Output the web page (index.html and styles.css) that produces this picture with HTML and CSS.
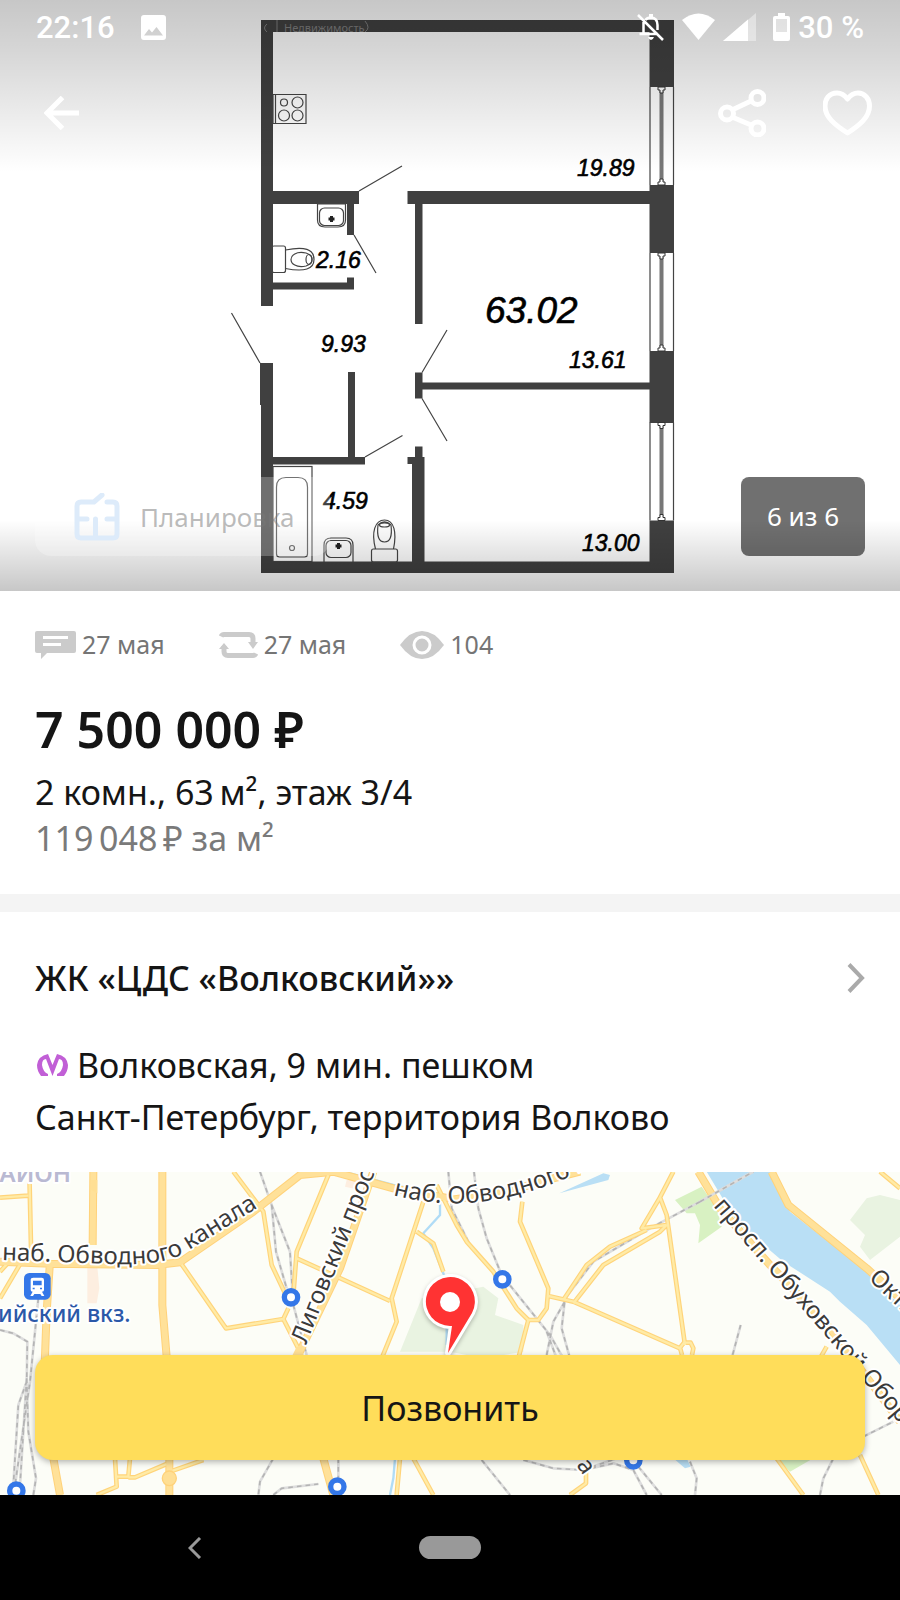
FILE: index.html
```html
<!DOCTYPE html>
<html lang=ru>
  <head>
    <meta charset=utf-8>
    <title>2 комн., 63 м²</title>
    <meta name=viewport content="width=device-width,initial-scale=1">
    <link rel="stylesheet" href="styles.css">
  </head>
  <body>
    <div class=gallery>
      <svg class=plan viewBox="0 0 900 591">
        <defs>
          <linearGradient id=shadeTop x1=0 y1=0 x2=0 y2=1>
            <stop offset=0 stop-opacity=".22"/>
            <stop offset=".3" stop-opacity=".16"/>
            <stop offset=1 stop-opacity=0 />
          </linearGradient>
          <linearGradient id=shadeBottom x1=0 y1=0 x2=0 y2=1>
            <stop offset=0 stop-opacity=0 />
            <stop offset=1 stop-opacity=".22"/>
          </linearGradient>
          <clipPath id=markClip><rect x=261 y=20 width=120 height=12 /></clipPath>
          <g id=window>
            <path class=pane d="M650 0V98M673.5 0V98"/>
            <rect class=bar x=659.5 y=4 width=4 height=90 />
            <path class=cap d="M658 0h7v3h-2v3h-3v-3h-2zM658 98h7v-3h-2v-3h-3v3h-2z"/>
          </g>
        </defs>
        <g class=walls>
          <path d="M261 20H674V87H649.500V32H273V191H359V204H354V235H347V204H273V282.500H347V277.500H354V289.500H273V306H261z"/>
          <path d="M407.500 191H649.500V185H674V253H649.500V204H422.500V324H415V204H407.500z"/>
          <path d="M415 372.500H422.500V382.500H649.500V351H674V423H649.500V389.500H422.500V398.500H415z"/>
          <path d="M260 363H273V457H348V372H355V457H365V464.500H273V561.500H412V464H407.500V457H415V446.500H422.500V457H424.500V561.500H649.500V520.500H674V573H261V405H260z"/>
        </g>
        <use href="#window" y=87 />
        <use href="#window" y=253 />
        <use href="#window" y=422.500 />
        <g class=lines>
          <path d="M359 191L402 166M354 235L376 273M260 363L231.500 313M422 372.500L447 330M422 398.500L447 441M365 457L402.500 435.500"/>
          <!-- stove -->
          <path d="M273 94.500H306V123.500H273zM275.500 94.500V123.500"/>
          <circle cx=284 cy=102.500 r=3.500 /><circle cx=297.500 cy=102.500 r=5.500 />
          <circle cx=284 cy=115.500 r=5.500 /><circle cx=297.500 cy=115.500 r=5.500 />
          <!-- wc -->
          <path d="M317.500 204H345.500V220Q345.500 227 338 227H325Q317.500 227 317.500 220z"/>
          <rect x=319.500 y=208 width=24 height=17.500 rx=5 />
          <path class=plus d="M328.500 219h6M331.500 216v6"/>
          <rect x=272 y=246 width=13.500 height=26.500 rx=2 />
          <path d="M285.500 250Q314 244 314 259.500Q314 274 285.500 268.500"/>
          <path d="M306 253C286 249 286 270 306 266Q312 264 312 259.500Q312 255 306 253z"/>
          <ellipse cx=309 cy=259.500 rx=3 ry=5 />
          <!-- bathroom -->
          <rect x=273 y=466.500 width=39 height=95 />
          <path d="M276.500 487Q276.500 477.500 286 477.500H298Q307.500 477.500 307.500 487V554Q307.500 557 304.500 557H279.500Q276.500 557 276.500 554z"/>
          <circle cx=292 cy=548 r=2.500 />
          <path d="M324 562V545Q324 538 331 538H346Q353 538 353 545V562"/>
          <rect x=326 y=540.500 width=25 height=17 rx=5 />
          <path class=plus d="M335.500 546h6M338.500 543v6"/>
          <rect x=371.500 y=549 width=26 height=13 rx=2 />
          <path d="M375.500 549C371 532 375 520 384.500 520S397 532 393.500 549"/>
          <path d="M378 525Q376 542 384.500 542Q393 542 391 525Q384.500 519 378 525z"/>
          <ellipse cx=384.500 cy=525 rx=5 ry=2 />
        </g>
        <g class=area>
          <text x=577 y=176>19.89</text>
          <text x=316 y=268>2.16</text>
          <text x=321 y=352>9.93</text>
          <text x=569 y=368>13.61</text>
          <text x=323 y=509>4.59</text>
          <text x=582 y=551>13.00</text>
          <text class=total x=485 y=323>63.02</text>
        </g>
        <rect width=900 height=172 fill="url(#shadeTop)"/>
        <rect y=520 width=900 height=71 fill="url(#shadeBottom)"/>
        <g class=mark clip-path="url(#markClip)">
          <text x=284 y=32>Недвижимость</text>
          <path d="M267 24q-5 4 0 8M277 20v12M365 21q6 7 0 11"/>
        </g>
      </svg>

      <div class=status>
        <span class=time>22:16</span>
        <svg class=picture width=25 height=25 viewBox="0 0 25 25">
          <path fill="#fff" fill-rule=evenodd d="M3 0H22Q25 0 25 3V22Q25 25 22 25H3Q0 25 0 22V3Q0 0 3 0zM3 20.500H22L15.500 12L11 17.500L8 14z"/>
        </svg>
        <svg class=bell width=27 height=28 viewBox="0 0 27 28">
          <path fill=none stroke="#fff" stroke-width=2.500 d="M6.500 9V21H2.500H21M8.500 7Q10 4.500 14 4.500Q20.500 5 20.500 12V17M1 2L26 27"/>
          <path fill="#fff" d="M12 1h4v4h-4zM11 24h6q-1 3-3 3t-3-3z"/>
        </svg>
        <svg class=wifi width=33 height=28 viewBox="0 0 33 28">
          <path fill="#fff" d="M0 7Q16.500-6 33 7L16.500 27z"/>
        </svg>
        <svg class=signal width=33 height=28 viewBox="0 0 33 28">
          <path fill="#fff" opacity=".4" d="M0 28L33 0V28z"/>
          <path fill="#fff" d="M0 28L25 6.500V28z"/>
        </svg>
        <svg class=battery width=17 height=28 viewBox="0 0 17 28">
          <path fill="#fff" opacity=".4" d="M2 5h13v14H2z"/>
          <path fill="#fff" fill-rule=evenodd d="M5 0H12V3H15Q17 3 17 5V26Q17 28 15 28H2Q0 28 0 26V5Q0 3 2 3H5zM3 6V19H14V6z"/>
        </svg>
        <span class=charge>30 %</span>
      </div>

      <div class=toolbar>
        <button class="icon back" aria-label="Назад">
          <svg width=35 height=34 viewBox="0 0 35 34">
            <path d="M18.500 1.500L3 17L18.500 32.500M3 17H35"/>
          </svg>
        </button>
        <button class=icon aria-label="Поделиться">
          <svg width=48 height=48 viewBox="0 0 48 48">
            <path d="M14 21L33 12M14 28L33 36"/>
            <circle cx=9 cy=24.500 r=6.500 /><circle cx=39.500 cy=9 r=6.500 /><circle cx=39.500 cy=39.500 r=6.500 />
          </svg>
        </button>
        <button class=icon aria-label="В избранное">
          <svg width=49 height=46 viewBox="0 0 49 46">
            <path stroke-linejoin=round d="M24.500 9Q20 3 14 3C6 3 2 9 2 16C2 27 12 35 24.500 43C37 35 46.500 27 46.500 16C46.500 9 42 3 35 3Q29 3 24.500 9z"/>
          </svg>
        </button>
      </div>

      <div class=captions>
        <button class=layout>
          <svg width=46 height=48 viewBox="0 0 46 48">
            <path d="M33 9H39Q43 9 43 13V41Q43 45 39 45H7Q3 45 3 41V13Q3 9 7 9H20L28 2M3 26H13M43 26H33M21.500 26V45"/>
          </svg>
          Планировка
        </button>
        <span class=counter>6 из 6</span>
      </div>
    </div>

    <div class=summary>
      <div class=meta>
        <span class=stat>
          <svg width=41 height=28 viewBox="0 0 41 28">
            <path fill="#cbcbcb" fill-rule=evenodd d="M2 0H39Q41 0 41 2V20Q41 22 39 22H12L6 28V22H2Q0 22 0 20V2Q0 0 2 0zM8 5V8H33V5zM8 12V15H26V12z"/>
          </svg>
          27 мая
        </span>
        <span class=stat>
          <svg width=39 height=28 viewBox="0 0 39 28">
            <path fill=none stroke="#cbcbcb" stroke-width=5 d="M2 5.500Q3 3.500 5 3.500H30Q34 3.500 34 7.500V14M37 22.500Q36 24.500 34 24.500H9Q5 24.500 5 20.500V15"/>
            <path fill="#cbcbcb" d="M29 11H39L34 18zM0 18H10L5 12z"/>
          </svg>
          27 мая
        </span>
        <span class=stat>
          <svg width=44 height=28 viewBox="0 0 44 28">
            <path fill="#cbcbcb" d="M0 14Q10 0 22 0T44 14Q34 28 22 28T0 14z"/>
            <circle cx=22 cy=14 r=8 fill="#cbcbcb" stroke="#fff" stroke-width=3 />
          </svg>
          104
        </span>
      </div>
      <h1>7&nbsp;500&nbsp;000&nbsp;₽</h1>
      <p>2 комн., 63&#8239;м², этаж 3/4</p>
      <p class=rate>119&#8239;048&#8239;₽ за м²</p>
    </div>

    <div class=place>
      <a class=complex href="#map">
        <h2>ЖК «ЦДС «Волковский»»</h2>
        <svg width=18 height=30 viewBox="0 0 18 30">
          <path fill=none stroke="#aaa" stroke-width=4 d="M2 1.500L15 15L2 28.500"/>
        </svg>
      </a>
      <p class=metro>
        <svg width=31 height=22 viewBox="0 0 31 22">
          <path fill="#c15fd6" d="M11 22H4Q0 17 0 11Q1 2 11 0L15.500 11L20 0Q30 2 31 11Q31 17 27 22H20V20Q25 18 26 11Q26 5 22 5L15.500 22L9 5Q5 5 5 11Q6 18 11 20z"/>
        </svg>
        Волковская, 9 мин. пешком
      </p>
      <p>Санкт-Петербург, территория Волково</p>
    </div>

    <div class=map id=map>
      <svg class=tiles viewBox="0 0 900 323">
        <svg width=900 height=323 viewBox="0 21 2700 969">
          <defs>
            <g id=wide>
              <path d="M280 20L278 240M487 20V420L502 600M150 290L140 440L134 600M0 290L150 296L470 300L540 292L760 140L900 30L1000 20L1180 70L1350 100M1350 105L1520 80L1640 45L1740 20"/>
              <path d="M1120 20L1020 310L890 580M508 880V990M160 880L180 990M970 880L1000 990M2095 20L2160 130L2310 300L2490 490L2700 770M2315 20L2365 120L2600 310L2700 400"/>
            </g>
            <g id=thin>
              <path d="M88 20L94 290M0 98L85 92M60 298L0 400M20 298L0 320M700 20L790 140L815 300L860 395M545 298L678 490L850 462L900 560M850 462L865 430"/>
              <path d="M985 30L890 260L880 390M890 280L1170 408M1270 110L1175 400L1190 470L1145 580M1250 200L1300 235L1330 320M1310 60L1370 180L1400 230L1480 320L1550 430L1585 465L1555 580"/>
              <path d="M1567 110L1560 170L1645 370L1640 430L1615 465L1585 465M1645 393L1720 410L2040 550M2020 20L1980 97L2000 150L2055 540M1980 97L1925 190L2000 180M1690 405L1760 300L1830 245L1940 195M1720 415L1810 300L1980 200L2000 180"/>
              <path d="M2046 570L2040 548L2052 533H2072L2080 550L2076 570M2640 20L2700 70M2480 545L2460 580M345 880L350 965L290 990M390 880L385 935L350 935M385 937L405 937L500 897M510 920L610 885"/>
              <path d="M1200 880L1190 990M1240 880L1300 990M1758 910V955L1710 990M2330 880L2410 990M2580 870L2635 990"/>
            </g>
            <g id=rails>
              <path d="M780 20L815 120L870 260L880 420L920 570M815 120L828 260L860 370M115 400L90 650L45 960M0 495L40 505L82 530L80 650L55 720L40 960M80 640L85 800L108 940L100 990M80 640L60 960"/>
              <path d="M1345 20L1355 130L1410 240L1500 340M1422 20L1435 130L1460 220L1505 330L1650 510L1690 580M1640 570L1660 470L1700 400M1710 580L1685 490L1695 400L1780 290L1950 190L2100 110L2260 20M2222 480L2195 580M1640 500L1670 580"/>
              <path d="M820 880L780 950L775 990M820 990L845 970L955 957M1015 880V940M1445 885L1530 990M1570 885L1660 910L1750 915L1840 895L1900 915L1940 990M1750 915L1850 880M1915 905L1985 990M2070 890L2090 940L2085 990M2500 880L2470 940L2460 990M2590 815L2680 770"/>
            </g>
          </defs>
          <rect y=21 width=2700 height=969 fill="#fcfdf7"/>
          <path fill="#e9f3e1" d="M1265 400L1200 560H1350L1450 580L1570 560L1570 480L1485 450L1495 400L1450 365zM2550 165L2600 100L2640 90L2700 105V215L2610 285L2580 245L2595 210z"/>
          <path fill="#d8f1c2" d="M2025 105L2105 65L2150 130L2165 185L2095 235L2100 180L2085 145L2060 145zM2330 880H2440L2370 920z"/>
          <path fill="#b9dff5" d="M2120 20H2310L2370 140L2600 320L2700 420V600L2600 480L2520 410L2490 380L2350 290L2210 170zM1678 85L1810 25L1830 30L1825 45zM2020 880H2060L2072 905L2055 910z"/>
          <path fill="#fdeee0" d="M262 305H292L298 370L290 415H262zM1040 45H1080V75L1035 65z"/>
          <path class=stream d="M1320 110V150L1270 205L1300 250L1340 350V540M1050 25L1180 60L1350 95M1185 880L1180 940L1170 990"/>
          <use href="#rails" class=rail />
          <use href="#rails" class=ties />
          <use href="#thin" class=thinEdge />
          <use href="#wide" class=wideEdge />
          <use href="#thin" class=thinFill />
          <use href="#wide" class=wideFill />
          <ellipse cx=508 cy=940 rx=21 ry=22 fill="#ffdf94" stroke="#ffd27a" stroke-width=4 />
          <path fill="#ffdf94" d="M875 575L890 545H905L912 575zM274 45H292V85L274 75z"/>
          <path class=rail d="M2100 110L2260 20"/>
          <path class=ties d="M2100 110L2260 20"/>
          <g class=stations>
            <circle cx=873 cy=397 r=20 /><circle cx=1507 cy=343 r=20 /><circle cx=49 cy=977 r=20 />
            <circle cx=1012 cy=965 r=20 /><circle cx=1900 cy=886 r=20 />
          </g>
          <rect x=72 y=324 width=80 height=80 rx=16 fill="#3477e8"/>
          <path fill="#fff" fill-rule=evenodd d="M100 338H125Q132 338 132 345V375Q132 380 126 380L133 393H125L121 387H103L99 393H91L98 380Q92 380 92 375V345Q92 338 100 338zM99 347V361H125V347zM98 368v5h6v-5zM120 368v5h6v-5z"/>
        </svg>
        <defs>
          <path id=embankment d="M2 88L110 92Q165 94 186 80L262 33"/>
          <path id=ligovsky d="M306 173L350 63L384-22"/>
          <path id=canal d="M393 23Q440 35 480 30T560 9L600-10"/>
          <path id=obukhov d="M713 34L768 98L830 169L900 252L930 287"/>
          <path id=oktyabr d="M868 107L940 175"/>
        </defs>
        <g class=streets>
          <text><textPath href="#embankment">наб. Обводного канала</textPath></text>
          <text><textPath href="#ligovsky">Лиговский просп.</textPath></text>
          <text><textPath href="#canal">наб. Обводного к</textPath></text>
          <text><textPath href="#obukhov">просп. Обуховской Обороны</textPath></text>
          <text><textPath href="#oktyabr">Октя</textPath></text>
          <text transform="translate(576 293) rotate(55)">а</text>
        </g>
        <text class=district x=-14 y=10>РАЙОН</text>
        <text class=terminal x=-2 y=150>ийский вкз.</text>
        <path class=pin d="M452 154L448 181L472 141A24.500 24.500 0 1 0 450 154z"/>
        <circle cx=450 cy=130 r=10 fill="#fff"/>
      </svg>
      <button class=call>Позвонить</button>
    </div>

    <div class=nav>
      <button class=prev aria-label="Назад">
        <svg width=14 height=22 viewBox="0 0 14 22">
          <path fill=none stroke="#999" stroke-width=3 d="M12 1L2 11L12 21"/>
        </svg>
      </button>
      <button class=home aria-label="Домой"></button>
    </div>
  </body>
</html>
```
FILE: styles.css
```css
html, body {
  margin: 0;
  width: 100%;
}
body {
  font-family: "Noto Sans", sans-serif;
  font-size: 34px;
  line-height: 46px;
  color: #151515;
  background-color: #fff;
}
h1, h2, p {
  margin: 0;
}
button {
  margin: 0;
  padding: 0;
  border: 0;
  background: none;
  font: inherit;
  color: inherit;
}
svg {
  display: block;
  flex: none;
}

/* gallery */
.gallery, .map {
  position: relative;
}
.plan, .tiles {
  width: 100%;
  height: auto;
}
.walls {
  fill: #404040;
}
.pane, .lines {
  fill: none;
  stroke: #444;
  stroke-width: 1.2px;
}
.bar {
  fill: #777;
}
.cap {
  fill: #fff;
  stroke: #333;
}
.plus {
  stroke: #222;
  stroke-width: 3px;
}
.area {
  font: italic 23px "Liberation Sans", sans-serif;
  fill: #000;
  stroke: #000;
  stroke-width: .6px;
}
.total {
  font-size: 37px;
}
.mark {
  font-size: 11px;
  fill: #666;
}
.mark path {
  fill: none;
  stroke: #666;
}
.status {
  position: absolute;
  top: 0;
  left: 0;
  right: 0;
  height: 54px;
  padding: 0 36px;
  display: flex;
  align-items: center;
  font: 500 31px Roboto, sans-serif;
  color: #fff;
}
.picture {
  margin-left: 26px;
}
.bell {
  margin-left: auto;
}
.wifi {
  margin-left: 18px;
}
.signal {
  margin-left: 8px;
}
.battery {
  margin-left: 17px;
}
.charge {
  margin-left: 8px;
}
.toolbar {
  position: absolute;
  top: 53px;
  left: 0;
  right: 0;
  height: 120px;
  padding: 0 28px 0 44px;
  display: flex;
  align-items: center;
  gap: 57px;
}
.icon svg {
  fill: none;
  stroke: #fff;
  stroke-width: 5px;
}
.back {
  margin-right: auto;
}
.captions {
  position: absolute;
  left: 35px;
  right: 35px;
  bottom: 35px;
  display: flex;
  justify-content: space-between;
  font-size: 26px;
}
.layout {
  display: flex;
  align-items: center;
  gap: 20px;
  height: 79px;
  padding: 0 35px 0 39px;
  border-radius: 16px;
  background-color: rgba(255,255,255,.25);
  color: rgba(120,120,120,.5);
}
.layout svg {
  fill: none;
  stroke: #ddebfa;
  stroke-width: 5px;
  stroke-linecap: round;
}
.counter {
  width: 124px;
  line-height: 79px;
  border-radius: 8px;
  text-align: center;
  color: #fff;
  background-color: rgba(0,0,0,.56);
}

/* price */
.summary {
  padding: 31px 35px 33px;
  border-bottom: 18px solid #f4f4f4;
}
.meta {
  display: flex;
  gap: 54px;
  font-size: 25px;
  line-height: 45px;
  color: #757575;
}
.stat {
  display: flex;
  align-items: center;
  gap: 6px;
}
h1 {
  margin: 29px 0 7px;
  font-size: 50px;
  font-weight: 600;
  line-height: 66px;
}
.rate {
  color: #7a7a7a;
}

/* address */
.place {
  padding: 43px 35px 32px;
}
.complex {
  display: flex;
  justify-content: space-between;
  align-items: center;
  color: inherit;
  text-decoration: none;
}
h2 {
  font-size: 34px;
  font-weight: 500;
}
.metro {
  display: flex;
  align-items: center;
  gap: 9px;
  margin: 41px 0 6px;
  padding-left: 2px;
}

/* map */
.map {
  overflow: hidden;
}
.stream {
  fill: none;
  stroke: #b0dcf6;
  stroke-width: 7px;
}
.rail, .ties, .thinEdge, .thinFill, .wideEdge, .wideFill {
  fill: none;
  stroke-linejoin: round;
}
.rail {
  stroke: #ddd;
  stroke-width: 8px;
}
.ties {
  stroke: #b4b4b4;
  stroke-width: 5px;
  stroke-dasharray: 14px 12px;
}
.thinEdge {
  stroke: #ffd47a;
  stroke-width: 14px;
}
.thinFill {
  stroke: #ffeba6;
  stroke-width: 7px;
}
.wideEdge {
  stroke: #ffd27a;
  stroke-width: 24px;
}
.wideFill {
  stroke: #ffe199;
  stroke-width: 18px;
}
.stations {
  fill: #fff;
  stroke: #3477e8;
  stroke-width: 16px;
}
.streets, .district, .terminal {
  font-size: 24px;
  fill: #3a3a3a;
  stroke: #fff;
  stroke-width: 4px;
  stroke-linejoin: round;
  paint-order: stroke;
}
.district {
  font-weight: 600;
  fill: #b9b9d2;
}
.terminal {
  font-size: 23px;
  font-weight: 500;
  fill: #2b58a8;
}
.pin {
  fill: #ff3333;
  stroke: #fff;
  stroke-width: 6px;
  stroke-linejoin: round;
  paint-order: stroke;
  filter: drop-shadow(0 2px 2px rgba(0,0,0,.25));
}
.call {
  position: absolute;
  left: 35px;
  right: 35px;
  bottom: 35px;
  height: 105px;
  border-radius: 18px;
  background-color: #ffdd5a;
  box-shadow: 0 2px 6px rgba(0,0,0,.3);
}

/* system buttons */
.nav {
  display: grid;
  grid-template-columns: 13fr 4fr 13fr;
  place-items: center;
  height: 105px;
  background-color: #000;
}
.home {
  width: 62px;
  height: 23px;
  border-radius: 12px;
  background-color: #999;
}
```
